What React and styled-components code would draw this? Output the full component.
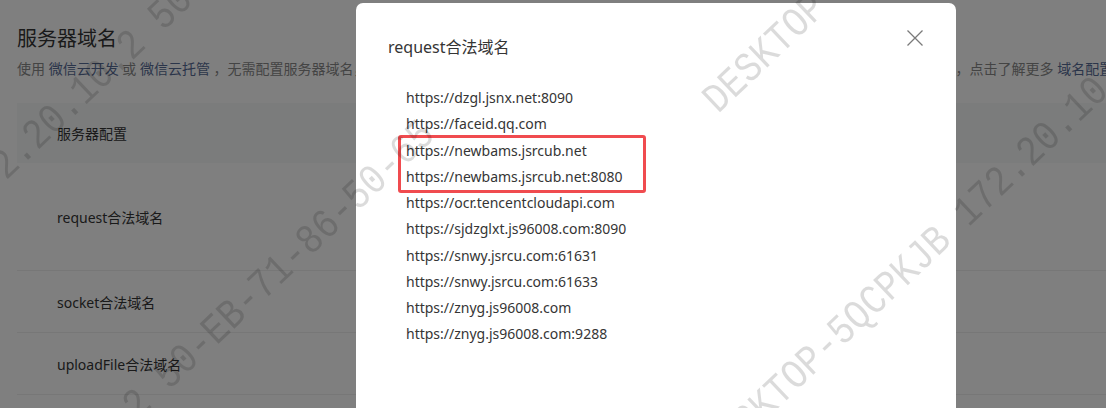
import styled, { createGlobalStyle } from 'styled-components';

const GlobalStyle = createGlobalStyle`
  html, body {
    margin: 0;
    padding: 0;
    background: #fff;
    overflow: hidden;
  }
  body {
    font-family: "Noto Sans", "Noto Sans CJK SC", sans-serif;
    color: #353535;
  }
`;

const Page = styled.div`
  width: 1106px;
  height: 408px;
  padding: 25px 0 0 17px;
  box-sizing: border-box;
`;

const Title = styled.h2`
  margin: 0;
  font-size: 20px;
  line-height: 28px;
  font-weight: normal;
  color: #353535;
`;

const Desc = styled.p`
  margin: 5px 0 0;
  font-size: 14px;
  line-height: 22px;
  color: #888;
  white-space: nowrap;
`;

const Link = styled.a`
  color: #576b95;
  text-decoration: none;
`;

const Table = styled.div`
  margin-top: 23px;
  font-size: 14px;
`;

const HeadRow = styled.div`
  height: 60px;
  display: flex;
  align-items: center;
  padding-left: 40px;
  background: #f6f8f9;
  color: #353535;
`;

const Row = styled.div`
  height: ${(p) => p.$height}px;
  display: flex;
  align-items: center;
  padding-left: 40px;
  border-bottom: 1px solid #eee;
  box-sizing: border-box;
  color: #353535;
`;

const Mask = styled.div`
  position: fixed;
  inset: 0;
  background: rgba(0, 0, 0, 0.5);
  padding: 3px 0 0 356px;
`;

const Dialog = styled.div`
  position: relative;
  width: 600px;
  height: 520px;
  background: #fff;
  border-radius: 7px;
  padding: 32px 32px 0;
  box-sizing: border-box;
`;

const DialogTitle = styled.h3`
  margin: 0;
  font-size: 16px;
  line-height: 24px;
  font-weight: normal;
  color: #353535;
`;

const CloseButton = styled.button`
  position: absolute;
  top: 27px;
  right: 33px;
  width: 16px;
  height: 16px;
  padding: 0;
  border: 0;
  background: none;
  cursor: pointer;
  display: flex;
`;

const DomainList = styled.ul`
  list-style: none;
  margin: 26px 0 0;
  padding: 0 0 0 18px;
  font-size: 14px;
  line-height: 26.25px;
  color: #353535;
`;

const Domain = styled.li`
  white-space: nowrap;
`;

// red annotation box round the two newbams entries
const Highlight = styled.li`
  margin: -3px 0 -3px -8px;
  width: 248px;
  padding-left: 5px;
  border: 3px solid #f04b4f;
  border-radius: 3px;
  box-sizing: border-box;
`;

const WatermarkLayer = styled.div`
  position: fixed;
  inset: 0;
  overflow: hidden;
  pointer-events: none;
`;

const WatermarkText = styled.span`
  position: absolute;
  left: ${(p) => p.$x - 20.5}px;
  top: ${(p) => p.$y - 5.8}px;
  transform-origin: 0 0;
  transform: rotate(-43.5deg) scaleX(0.86);
  font-family: "Liberation Mono", monospace;
  font-size: 42px;
  line-height: 42px;
  white-space: pre;
  color: rgba(0, 0, 0, 0.14);
`;

const WATERMARK = 'DESKTOP-5QCPKJB 172.20.10.2 50-EB-71-86-50-65';

const watermarks = [
  { x: 716, y: 97 },
  { x: 715, y: 449 },
  { x: -279, y: 432 },
  { x: -273, y: 791 },
];

const domains = [
  'https://dzgl.jsnx.net:8090',
  'https://faceid.qq.com',
  'https://newbams.jsrcub.net',
  'https://newbams.jsrcub.net:8080',
  'https://ocr.tencentcloudapi.com',
  'https://sjdzglxt.js96008.com:8090',
  'https://snwy.jsrcu.com:61631',
  'https://snwy.jsrcu.com:61633',
  'https://znyg.js96008.com',
  'https://znyg.js96008.com:9288',
];

const CloseIcon = () => (
  <svg width="16" height="16" viewBox="0 0 16 16">
    <path d="M0.5 0.5 L15.5 15.5 M15.5 0.5 L0.5 15.5" stroke="#7a7a7a" strokeWidth="1.3" fill="none" />
  </svg>
);

const App = () => {
  const plain = domains.slice(0, 2);
  const marked = domains.slice(2, 4);
  const rest = domains.slice(4);

  return (
    <>
      <GlobalStyle />
      <Page>
        <Title>服务器域名</Title>
        <Desc>
          使用 <Link>微信云开发</Link> 或 <Link>微信云托管</Link> ，无需配置服务器域名，如使用自己的服务器，需要在此处配置服务器域名，小程序只可以跟指定的域名进行网络通信的，点击了解更多 <Link>域名配置说明</Link>
        </Desc>
        <Table>
          <HeadRow>服务器配置</HeadRow>
          <Row $height={108}>request合法域名</Row>
          <Row $height={62}>socket合法域名</Row>
          <Row $height={62}>uploadFile合法域名</Row>
          <Row $height={62}>downloadFile合法域名</Row>
        </Table>
      </Page>

      <Mask>
        <Dialog>
          <DialogTitle>request合法域名</DialogTitle>
          <CloseButton aria-label="关闭">
            <CloseIcon />
          </CloseButton>
          <DomainList>
            {plain.map((d) => (
              <Domain key={d}>{d}</Domain>
            ))}
            <Highlight>
              {marked.map((d) => (
                <div key={d}>{d}</div>
              ))}
            </Highlight>
            {rest.map((d) => (
              <Domain key={d}>{d}</Domain>
            ))}
          </DomainList>
        </Dialog>
      </Mask>

      <WatermarkLayer>
        {watermarks.map((w, i) => (
          <WatermarkText key={i} $x={w.x} $y={w.y}>
            {WATERMARK}
          </WatermarkText>
        ))}
      </WatermarkLayer>
    </>
  );
};

export default App;
